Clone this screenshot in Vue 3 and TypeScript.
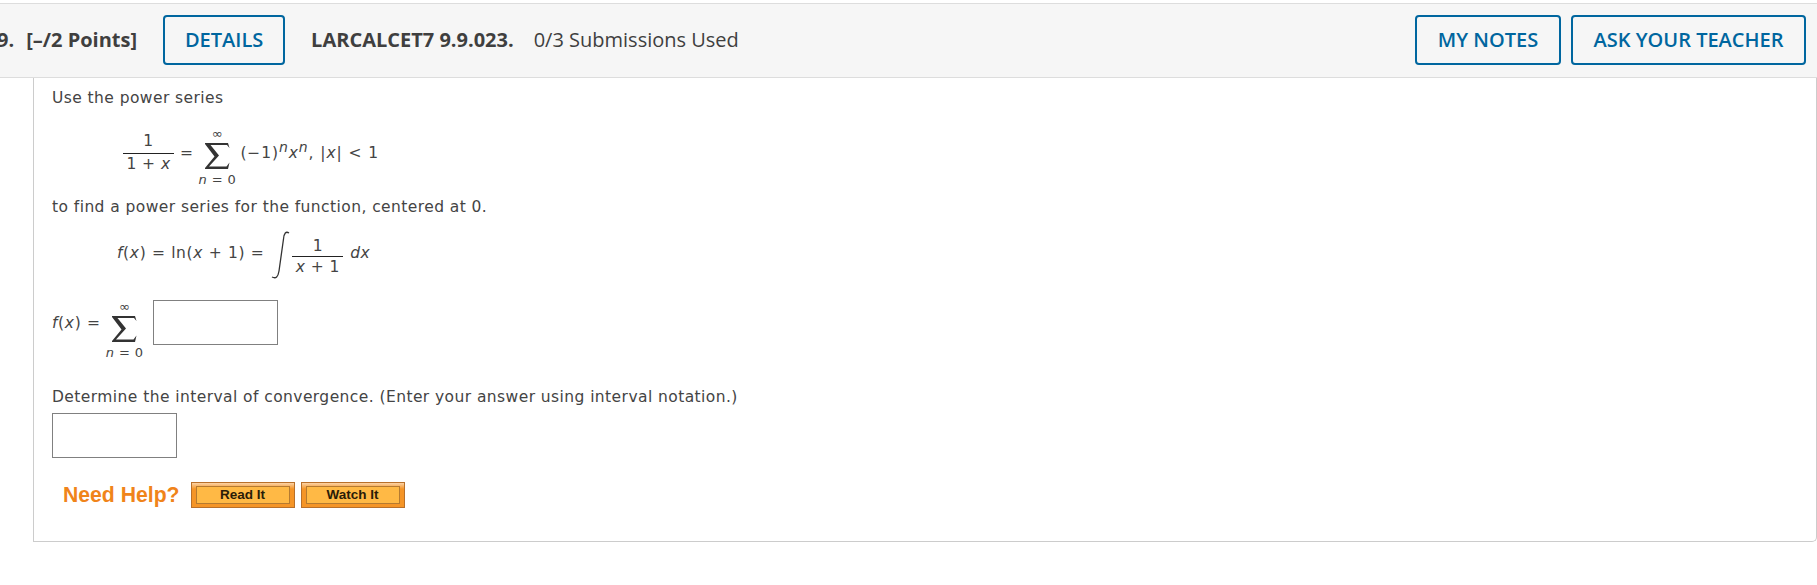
<script setup lang="ts">
const headLabel = 'LARCALCET7 9.9.023.'
const helpButtons = ['Read It', 'Watch It']
</script>

<template>
  <div class="page">
    <header class="head">
      <span class="points"><span class="num">9.</span>[–/2 Points]</span>
      <button class="btn details">DETAILS</button>
      <strong class="code">{{ headLabel }}</strong>
      <span class="subs">0/3 Submissions Used</span>
      <button class="btn notes">MY NOTES</button>
      <button class="btn ask">ASK YOUR TEACHER</button>
    </header>

    <section class="card">
      <p class="line first">Use the power series</p>

      <div class="eq eq-one">
        <span class="frac">
          <span class="top">1</span>
          <span class="bot">1 + <i>x</i></span>
        </span>
        <span class="eq-sign">=</span>
        <span class="sum">
          <span class="lim inf">∞</span>
          <svg class="sigma" width="27" height="28" viewBox="0 0 27 28">
            <path d="M1 1H24L25.500 6L23 3H6.500L15 13.500L5 24.500H22.500L25.500 20.500L24 27H1V26L10.500 14.500L1 2Z" fill="#333" />
          </svg>
          <span class="lim"><i>n</i> = 0</span>
        </span>
        <span class="series">(−1)<sup><i>n</i></sup><i>x</i><sup><i>n</i></sup>, |<i>x</i>| &lt; 1</span>
      </div>

      <p class="line second">to find a power series for the function, centered at 0.</p>

      <div class="eq eq-two">
        <span class="fx"><i>f</i>(<i>x</i>) = ln(<i>x</i> + 1) =</span>
        <svg class="integral" width="20" height="48" viewBox="0 0 20 48">
          <path d="M18 2C15 0 13 2 12.500 8L8 40C7 46 5 48 1 46" fill="none" stroke="#333" stroke-width="1.300" />
        </svg>
        <span class="frac">
          <span class="top">1</span>
          <span class="bot"><i>x</i> + 1</span>
        </span>
        <span class="dx"><i>dx</i></span>
      </div>

      <div class="eq eq-three">
        <span class="fx"><i>f</i>(<i>x</i>) =</span>
        <span class="sum">
          <span class="lim inf">∞</span>
          <svg class="sigma" width="27" height="28" viewBox="0 0 27 28">
            <path d="M1 1H24L25.500 6L23 3H6.500L15 13.500L5 24.500H22.500L25.500 20.500L24 27H1V26L10.500 14.500L1 2Z" fill="#333" />
          </svg>
          <span class="lim"><i>n</i> = 0</span>
        </span>
        <input class="answer" type="text" />
      </div>

      <p class="line third">Determine the interval of convergence. (Enter your answer using interval notation.)</p>
      <input class="answer block" type="text" />

      <div class="help">
        <span class="help-label">Need Help?</span>
        <button v-for="b in helpButtons" :key="b" class="help-btn"><span>{{ b }}</span></button>
      </div>
    </section>
  </div>
</template>

<style scoped>
.page {
  width: 1817px;
  padding-top: 3px;
  overflow: hidden;
  font-family: "DejaVu Sans", Verdana, sans-serif;
  color: #444;
}
.head {
  display: flex;
  align-items: center;
  box-sizing: border-box;
  height: 75px;
  padding-bottom: 2px;
  background: #f6f6f6;
  border-top: 1px solid #ddd;
  border-bottom: 1px solid #ddd;
  font-family: "Open Sans", sans-serif;
  font-size: 20px;
  color: #3f3f3f;
}
.points {
  margin-left: -3px;
  font-weight: 700;
  white-space: nowrap;
}
.num {
  margin-right: 12px;
}
.btn {
  box-sizing: border-box;
  height: 50px;
  padding: 0;
  background: transparent;
  border: 2px solid #00669f;
  border-radius: 4px;
  font: 600 20px "Open Sans", sans-serif;
  color: #00669f;
}
.details {
  width: 122px;
  margin-left: 26px;
}
.code {
  margin-left: 26px;
  font-weight: 700;
}
.subs {
  margin-left: 20px;
}
.notes {
  width: 146px;
  margin-left: auto;
}
.ask {
  width: 235px;
  margin-left: 10px;
  margin-right: 11px;
}
.card {
  box-sizing: border-box;
  height: 464px;
  margin-left: 33px;
  padding-left: 18px;
  background: #fff;
  border: 1px solid #ccc;
  border-top: 0;
  border-bottom-right-radius: 5px;
  font-size: 15.500px;
  letter-spacing: 0.425px;
}
.line {
  margin: 0;
  line-height: 20px;
  white-space: nowrap;
}
.first {
  padding-top: 10px;
}
.eq {
  display: flex;
  align-items: center;
}
.eq-one {
  margin-top: 21px;
  margin-left: 71px;
  height: 57px;
}
.eq-one .frac,
.eq-one .eq-sign,
.eq-one .series {
  margin-bottom: 9px;
}
.frac {
  display: inline-flex;
  flex-direction: column;
  align-items: center;
  width: 51px;
}
.top {
  line-height: 20px;
  padding-bottom: 2px;
}
.bot {
  width: 100%;
  text-align: center;
  line-height: 21px;
  border-top: 1px solid #222;
}
.eq-two .top {
  padding-bottom: 0;
}
.eq-sign {
  margin-left: 6px;
}
.sum {
  display: inline-flex;
  flex-direction: column;
  align-items: center;
  width: 40px;
  margin-left: 4px;
}
.lim {
  font-size: 13px;
  line-height: 13px;
  white-space: nowrap;
}
.inf {
  line-height: 10px;
}
.sigma {
  display: block;
  margin: 3px 0;
}
.series {
  margin-left: 3px;
  letter-spacing: 0.900px;
  white-space: pre;
}
sup {
  font-size: 14px;
  line-height: 0;
}
.second {
  margin-top: 11px;
}
.eq-two {
  margin-top: 13px;
  margin-left: 65px;
  height: 50px;
}
.fx {
  line-height: 20px;
  letter-spacing: 0.650px;
  white-space: pre;
}
.eq-two .fx,
.dx {
  margin-bottom: 4px;
}
.eq-two .frac {
  margin-top: 4px;
}
.integral {
  margin-left: 7px;
  margin-right: 1px;
}
.dx {
  margin-left: 7px;
}
.eq-three {
  align-items: flex-start;
  margin-top: 20px;
  height: 59px;
}
.eq-three .fx {
  margin-top: 13px;
}
.eq-three .sum {
  margin-top: 2px;
  margin-left: 4px;
}
.answer {
  box-sizing: border-box;
  width: 125px;
  height: 45px;
  margin: 0 0 0 8px;
  padding: 0;
  background: #fff;
  border: 1px solid #808080;
}
.third {
  margin-top: 28px;
}
.block {
  display: block;
  margin: 6px 0 0;
}
.help {
  display: flex;
  align-items: center;
  gap: 6px;
  margin-top: 24px;
  margin-left: 11px;
}
.help-label {
  margin-right: 5px;
  font: 700 21.200px "Liberation Sans", Arial, sans-serif;
  letter-spacing: 0;
  color: #f0841a;
}
.help-btn {
  box-sizing: border-box;
  width: 104px;
  height: 26px;
  padding: 3px 4px 3px;
  background: linear-gradient(#fbd3a6, #f59527 25%);
  border: 1px solid #b9702a;
  font: 700 13.500px "Liberation Sans", Arial, sans-serif;
  letter-spacing: 0;
  color: #2a1c08;
}
.help-btn span {
  display: block;
  box-sizing: border-box;
  height: 100%;
  line-height: 16px;
  background: #ffb945;
  border: 1px solid #b57a30;
}
</style>
